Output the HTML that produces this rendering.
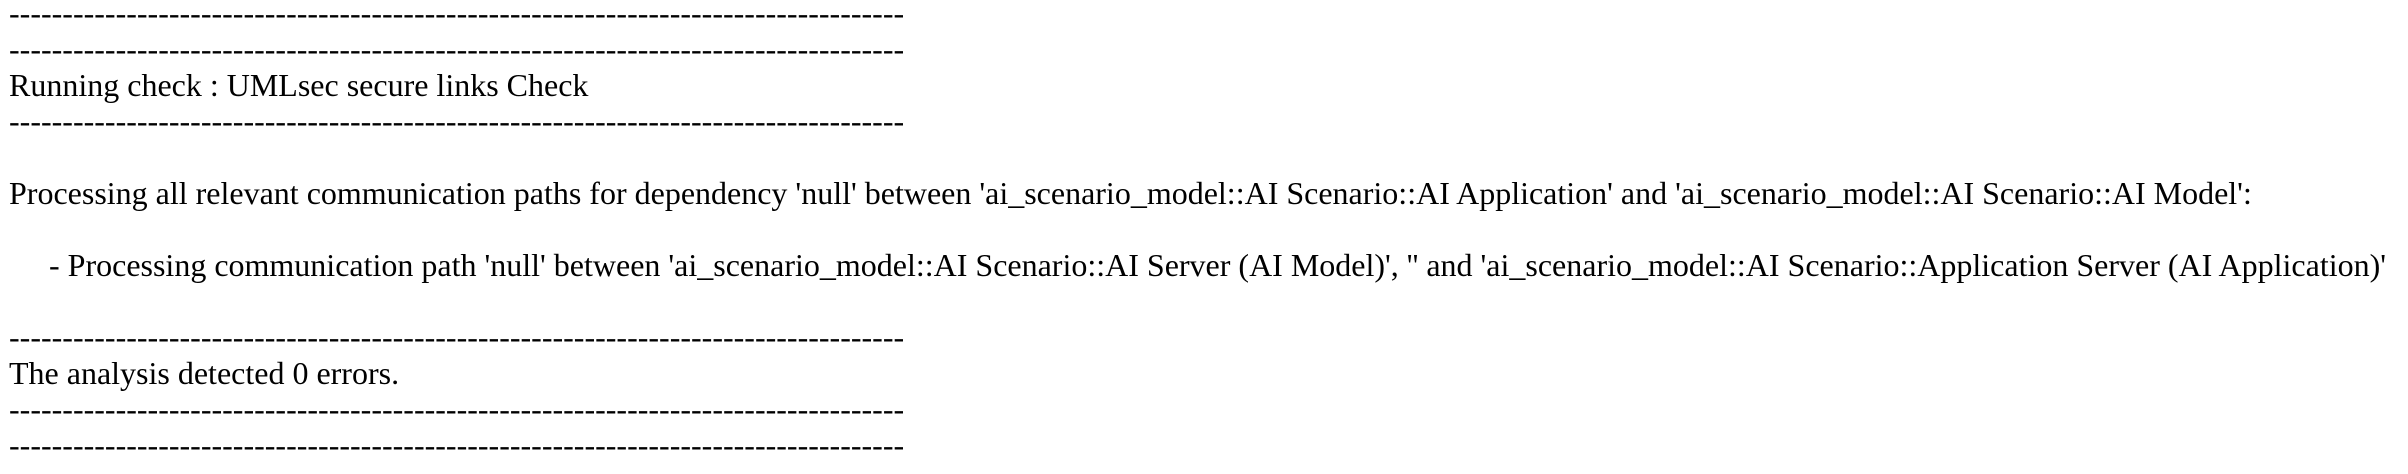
<!DOCTYPE html>
<html><head><meta charset="utf-8"><style>
html,body{margin:0;padding:0;background:#fff;width:2408px;height:474px;overflow:hidden}
body{font-family:"Liberation Serif",serif;font-size:32px;line-height:36px;color:#000;white-space:pre;padding-left:9px;}
.w{position:relative;top:-5px}
</style></head><body><div class="w">------------------------------------------------------------------------------------
------------------------------------------------------------------------------------
Running check : UMLsec secure links Check
------------------------------------------------------------------------------------

Processing all relevant communication paths for dependency 'null' between 'ai_scenario_model::AI Scenario::AI Application' and 'ai_scenario_model::AI Scenario::AI Model':

     - Processing communication path 'null' between 'ai_scenario_model::AI Scenario::AI Server (AI Model)', '' and 'ai_scenario_model::AI Scenario::Application Server (AI Application)'

------------------------------------------------------------------------------------
The analysis detected 0 errors.
------------------------------------------------------------------------------------
------------------------------------------------------------------------------------</div></body></html>
